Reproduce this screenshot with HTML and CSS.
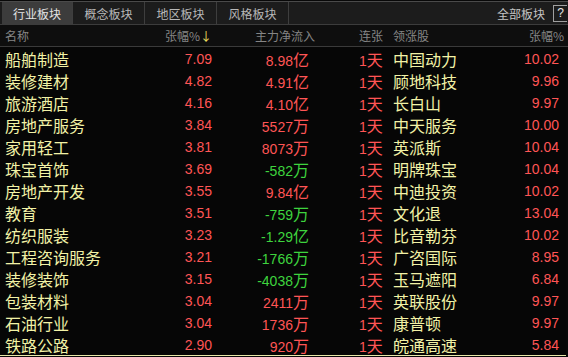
FILE: index.html
```html
<!DOCTYPE html>
<html lang="zh">
<head>
<meta charset="utf-8">
<link rel="stylesheet" href="styles.css">
</head>
<body>
<div class="panel">
  <div class="tabbar">
    <div class="tab active">行业板块</div>
    <div class="tab">概念板块</div>
    <div class="tab">地区板块</div>
    <div class="tab">风格板块</div>
    <div class="spacer"></div>
    <div class="all">全部板块</div>
    <div class="help">?</div>
  </div>
  <div class="row head">
    <div class="c1">名称</div>
    <div class="c2">张幅%<span class="arrow">↓</span></div>
    <div class="c3">主力净流入</div>
    <div class="c4">连张</div>
    <div class="c5">领涨股</div>
    <div class="c6">张幅%</div>
  </div>
  <div class="body">
    <div class="row"><div class="c1">船舶制造</div><div class="c2 up">7.09</div><div class="c3 up">8.98<span class="u">亿</span></div><div class="c4 up">1<span class="u">天</span></div><div class="c5">中国动力</div><div class="c6 up">10.02</div></div>
    <div class="row"><div class="c1">装修建材</div><div class="c2 up">4.82</div><div class="c3 up">4.91<span class="u">亿</span></div><div class="c4 up">1<span class="u">天</span></div><div class="c5">顾地科技</div><div class="c6 up">9.96</div></div>
    <div class="row"><div class="c1">旅游酒店</div><div class="c2 up">4.16</div><div class="c3 up">4.10<span class="u">亿</span></div><div class="c4 up">1<span class="u">天</span></div><div class="c5">长白山</div><div class="c6 up">9.97</div></div>
    <div class="row"><div class="c1">房地产服务</div><div class="c2 up">3.84</div><div class="c3 up">5527<span class="u">万</span></div><div class="c4 up">1<span class="u">天</span></div><div class="c5">中天服务</div><div class="c6 up">10.00</div></div>
    <div class="row"><div class="c1">家用轻工</div><div class="c2 up">3.81</div><div class="c3 up">8073<span class="u">万</span></div><div class="c4 up">1<span class="u">天</span></div><div class="c5">英派斯</div><div class="c6 up">10.04</div></div>
    <div class="row"><div class="c1">珠宝首饰</div><div class="c2 up">3.69</div><div class="c3 down">-582<span class="u">万</span></div><div class="c4 up">1<span class="u">天</span></div><div class="c5">明牌珠宝</div><div class="c6 up">10.04</div></div>
    <div class="row"><div class="c1">房地产开发</div><div class="c2 up">3.55</div><div class="c3 up">9.84<span class="u">亿</span></div><div class="c4 up">1<span class="u">天</span></div><div class="c5">中迪投资</div><div class="c6 up">10.02</div></div>
    <div class="row"><div class="c1">教育</div><div class="c2 up">3.51</div><div class="c3 down">-759<span class="u">万</span></div><div class="c4 up">1<span class="u">天</span></div><div class="c5">文化退</div><div class="c6 up">13.04</div></div>
    <div class="row"><div class="c1">纺织服装</div><div class="c2 up">3.23</div><div class="c3 down">-1.29<span class="u">亿</span></div><div class="c4 up">1<span class="u">天</span></div><div class="c5">比音勒芬</div><div class="c6 up">10.02</div></div>
    <div class="row"><div class="c1">工程咨询服务</div><div class="c2 up">3.21</div><div class="c3 down">-1766<span class="u">万</span></div><div class="c4 up">1<span class="u">天</span></div><div class="c5">广咨国际</div><div class="c6 up">8.95</div></div>
    <div class="row"><div class="c1">装修装饰</div><div class="c2 up">3.15</div><div class="c3 down">-4038<span class="u">万</span></div><div class="c4 up">1<span class="u">天</span></div><div class="c5">玉马遮阳</div><div class="c6 up">6.84</div></div>
    <div class="row"><div class="c1">包装材料</div><div class="c2 up">3.04</div><div class="c3 up">2411<span class="u">万</span></div><div class="c4 up">1<span class="u">天</span></div><div class="c5">英联股份</div><div class="c6 up">9.97</div></div>
    <div class="row"><div class="c1">石油行业</div><div class="c2 up">3.04</div><div class="c3 up">1736<span class="u">万</span></div><div class="c4 up">1<span class="u">天</span></div><div class="c5">康普顿</div><div class="c6 up">9.97</div></div>
    <div class="row"><div class="c1">铁路公路</div><div class="c2 up">2.90</div><div class="c3 up">920<span class="u">万</span></div><div class="c4 up">1<span class="u">天</span></div><div class="c5">皖通高速</div><div class="c6 up">5.84</div></div>
  </div>
</div>
</body>
</html>
```

FILE: styles.css
```css
html, body {
  margin: 0;
  padding: 0;
  background: #000;
}
.panel {
  width: 568px;
  height: 357px;
  overflow: hidden;
  background: #080808;
  font-family: "Liberation Sans", "Noto Sans CJK SC", sans-serif;
}
.tabbar {
  display: flex;
  height: 22px;
  border-top: 1px solid #4a4a4a;
  border-bottom: 1px solid #3c3c3c;
  margin-top: 1px;
  padding-left: 2px;
  background: #1c1c1c;
  font-family: "Noto Sans CJK SC", sans-serif;
  font-size: 12px;
  align-items: stretch;
}
.tab {
  width: 71px;
  display: flex;
  align-items: center;
  justify-content: center;
  color: #b8b8b8;
  background: #1c1c1c;
  border-right: 1px solid #3e3e3e;
}
.tab.active {
  width: 70px;
  background: #3c3c3c;
  color: #e4e4e4;
}
.spacer { flex: 1 1 auto; }
.all {
  flex: none;
  display: flex;
  align-items: center;
  color: #c4c4c4;
  margin-right: 8px;
}
.help {
  flex: none;
  align-self: center;
  box-sizing: border-box;
  width: 14px;
  height: 17px;
  border: 1px solid #a0a0a0;
  border-right: none;
  background: #1c1c1c;
  color: #e6e6e6;
  font-family: "Liberation Sans", sans-serif;
  font-size: 12px;
  line-height: 15px;
  text-align: center;
  margin-right: 1px;
}
.row {
  display: grid;
  grid-template-columns: 150px 57px 97px 84px 87px 79px;
  height: 22px;
  align-items: center;
  padding-left: 5px;
  white-space: nowrap;
}
.head {
  height: 21px;
  background: #0e0e0e;
  border-bottom: 1px solid #3a3a3a;
  color: #858585;
  font-family: "Noto Sans CJK SC", sans-serif;
  font-size: 12px;
}
.head .c3 { text-align: left; padding-left: 43px; }
.head .c6 { text-align: right; margin-right: -5px; }
.arrow { color: #f0e060; font-size: 12px; }
.body {
  height: 308px;
  background: #060606;
  border-bottom: 1px solid #e8e8a8;
  width: 566px;
}
.c1, .c5 {
  font-family: "Noto Sans CJK SC", sans-serif;
  font-size: 16px;
  color: #f2f2a6;
}
.head .c1, .head .c5 { font-size: 12px; color: #858585; }
.c2, .c3, .c6 { text-align: right; }
.c4 { padding-left: 50px; }
.body .c2, .body .c3, .body .c4, .body .c6 {
  font-size: 14px;
}
.up { color: #ff5555; }
.down { color: #3ed43e; }
.u {
  font-family: "Noto Sans CJK SC", sans-serif;
  font-size: 16px;
}
```
